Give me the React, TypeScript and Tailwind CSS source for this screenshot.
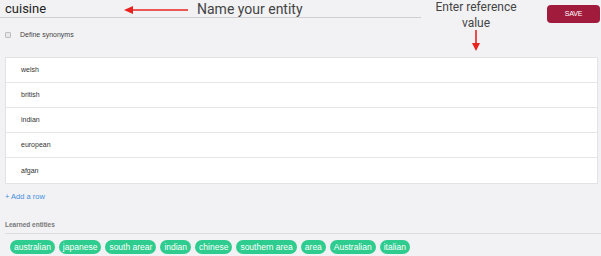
import React from 'react';

const values = ['welsh', 'british', 'indian', 'european', 'afgan'];
const learned = ['australian', 'japanese', 'south arear', 'indian', 'chinese', 'southern area', 'area', 'Australian', 'italian'];

const App: React.FC = () => {
  return (
    <div className="w-[601px] h-[256px] bg-[#f2f2f5] overflow-hidden relative font-['Liberation_Sans',Arial,sans-serif]">
      {/* Header */}
      <div className="flex items-start h-[28px]">
        <div className="w-[421px] h-[18px] border-b border-[#cfcfd3] flex items-end pl-[5px] pb-[1px]">
          <span className="text-[13px] leading-[15px] text-[#222] font-['Roboto',sans-serif]">cuisine</span>
        </div>
        <div className="flex-1 flex justify-end pt-[5px] pr-px">
          <button className="w-[53px] h-[18px] rounded-[4px] bg-[#a11b3d] text-white text-[7px] tracking-tight">SAVE</button>
        </div>
      </div>

      {/* annotation: name arrow */}
      <div className="absolute left-[123px] top-[1px] flex items-center gap-[8px]">
        <svg width="66" height="14" viewBox="0 0 66 14">
          <line x1="8" y1="8" x2="65" y2="8" stroke="#e8231f" strokeWidth="1.6" />
          <polygon points="1,8 10,4 10,12" fill="#e8231f" />
        </svg>
        <span className="text-[14px] leading-[16px] text-[#444] font-['Roboto',sans-serif]">Name your entity</span>
      </div>

      {/* annotation: reference value */}
      <div className="absolute left-[424px] top-[-1px] w-[104px] flex flex-col items-center text-[12px] leading-[16px] text-[#444] font-['Roboto',sans-serif]">
        <span>Enter reference</span>
        <span>value</span>
        <svg width="10" height="22" viewBox="0 0 10 22" className="mt-[-1px]">
          <line x1="5" y1="0" x2="5" y2="16" stroke="#e8231f" strokeWidth="1.6" />
          <polygon points="5,21 1,13 9,13" fill="#e8231f" />
        </svg>
      </div>

      {/* Synonyms checkbox */}
      <div className="flex items-center pl-[5px] mt-[2px] h-[10px]">
        <div className="w-[6px] h-[6px] border border-[#bdbdc2] bg-[#e9e9ec] rounded-[1px]" />
        <span className="ml-[9px] text-[7px] text-[#444]">Define synonyms</span>
      </div>

      {/* Values table */}
      <div className="ml-[5px] mr-[3px] mt-[17px] border border-[#e3e3e6] bg-white">
        {values.map((v, i) => (
          <div
            key={v}
            className={`h-[25px] flex items-center pl-[15px] pt-[1px] text-[7px] text-[#333] ${i < values.length - 1 ? 'border-b border-[#e6e6e9]' : ''}`}
          >
            {v}
          </div>
        ))}
      </div>

      <div className="pl-[5px] mt-[7px] text-[7.5px] text-[#3f8fe0]">+ Add a row</div>

      {/* Learned entities */}
      <div className="mt-[18px] ml-[5px] border-b border-[#dcdce0] pb-[3px] text-[6.5px] font-bold text-[#777]">Learned entities</div>
      <div className="flex gap-[4px] pl-[10px] mt-[6px]">
        {learned.map((l, i) => (
          <span key={i} className="h-[14px] px-[4px] rounded-full bg-[#2ecc8e] text-white text-[8.5px] leading-[14px]">
            {l}
          </span>
        ))}
      </div>
    </div>
  );
};

export default App;
